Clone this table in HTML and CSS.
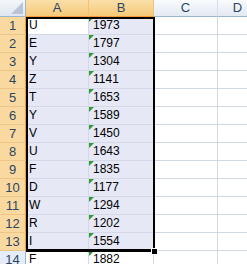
FILE: index.html
```html
<!DOCTYPE html>
<html>
<head>
<meta charset="utf-8">
<link rel="stylesheet" href="styles.css">
</head>
<body>
<div class="wrap">
  <div class="sheet">
    <div class="corner"><span class="tri"></span></div>
    <div class="ch sel">A</div>
    <div class="ch sel">B</div>
    <div class="ch">C</div>
    <div class="ch last">D</div>

    <div class="rh sel">1</div><div class="c active">U</div><div class="c s n">1973</div><div class="c"></div><div class="c"></div>
    <div class="rh sel">2</div><div class="c s">E</div><div class="c s n">1797</div><div class="c"></div><div class="c"></div>
    <div class="rh sel">3</div><div class="c s">Y</div><div class="c s n">1304</div><div class="c"></div><div class="c"></div>
    <div class="rh sel">4</div><div class="c s">Z</div><div class="c s n">1141</div><div class="c"></div><div class="c"></div>
    <div class="rh sel">5</div><div class="c s">T</div><div class="c s n">1653</div><div class="c"></div><div class="c"></div>
    <div class="rh sel">6</div><div class="c s">Y</div><div class="c s n">1589</div><div class="c"></div><div class="c"></div>
    <div class="rh sel">7</div><div class="c s">V</div><div class="c s n">1450</div><div class="c"></div><div class="c"></div>
    <div class="rh sel">8</div><div class="c s">U</div><div class="c s n">1643</div><div class="c"></div><div class="c"></div>
    <div class="rh sel">9</div><div class="c s">F</div><div class="c s n">1835</div><div class="c"></div><div class="c"></div>
    <div class="rh sel">10</div><div class="c s">D</div><div class="c s n">1177</div><div class="c"></div><div class="c"></div>
    <div class="rh sel">11</div><div class="c s">W</div><div class="c s n">1294</div><div class="c"></div><div class="c"></div>
    <div class="rh sel">12</div><div class="c s">R</div><div class="c s n">1202</div><div class="c"></div><div class="c"></div>
    <div class="rh sel">13</div><div class="c s">I</div><div class="c s n">1554</div><div class="c"></div><div class="c"></div>
    <div class="rh">14</div><div class="c">F</div><div class="c n">1882</div><div class="c"></div><div class="c"></div>
  </div>
  <div class="selbox"></div>
  <div class="handle"></div>
</div>
</body>
</html>
```

FILE: styles.css
```css
html, body {
  margin: 0;
  padding: 0;
  background: #ffffff;
  overflow: hidden;
}
.wrap {
  position: relative;
  width: 247px;
  height: 264px;
  overflow: hidden;
}
.sheet {
  display: grid;
  grid-template-columns: 26px 63px 65px 64px 40px;
  grid-template-rows: 17px;
  grid-auto-rows: 18px;
  font-family: "Liberation Sans", Arial, sans-serif;
  font-size: 12px;
}
.sheet > div {
  box-sizing: border-box;
}
.corner {
  position: relative;
  background: linear-gradient(#f3f6fa, #e0e7f0);
  border-right: 1px solid #9eb6ce;
  border-bottom: 1px solid #9eb6ce;
}
.tri {
  position: absolute;
  right: 2px;
  bottom: 2px;
  width: 0;
  height: 0;
  border-left: 12px solid transparent;
  border-bottom: 12px solid #b8c5d6;
}
.ch {
  background: linear-gradient(#f9fbfd, #e3e9f2);
  border-right: 1px solid #d5dee9;
  border-bottom: 1px solid #9eb6ce;
  color: #2b4563;
  font-size: 13px;
  line-height: 16px;
  text-align: center;
}
.ch.sel {
  background: linear-gradient(#fadfaa, #f6c978);
  border-right: 1px solid #f2c26e;
  border-bottom: 1px solid #f29b37;
}
.rh {
  background: #e4ecf7;
  border-right: 1px solid #9eb6ce;
  border-bottom: 1px solid #9eb6ce;
  color: #2b4563;
  font-size: 13px;
  line-height: 17px;
  text-align: center;
}
.rh.sel {
  background: #f9d9a0;
  border-right: 1px solid #f29b37;
  border-bottom: 1px solid #eec588;
}
.c {
  position: relative;
  border-right: 1px solid #d0d7e5;
  border-bottom: 1px solid #d0d7e5;
  padding-left: 3px;
  line-height: 17px;
  color: #000;
  white-space: nowrap;
}
.c.s {
  background: #e6e9f5;
  border-right-color: #d4d9ea;
  border-bottom-color: #d4d9ea;
}
.c.active {
  background: #ffffff;
}
.c.n {
  padding-left: 4px;
}
.c.n::before {
  content: "";
  position: absolute;
  left: 0;
  top: 0;
  width: 0;
  height: 0;
  border-top: 5px solid #2e9a32;
  border-right: 5px solid transparent;
}
.selbox {
  position: absolute;
  left: 26px;
  top: 17px;
  width: 129px;
  height: 235px;
  box-sizing: border-box;
  border: 2px solid #000;
  border-right-width: 2px;
  border-bottom-width: 3px;
  pointer-events: none;
}
.handle {
  position: absolute;
  left: 151px;
  top: 248px;
  width: 7px;
  height: 7px;
  box-sizing: border-box;
  background: #000;
  border: 1px solid #fff;
}
```
